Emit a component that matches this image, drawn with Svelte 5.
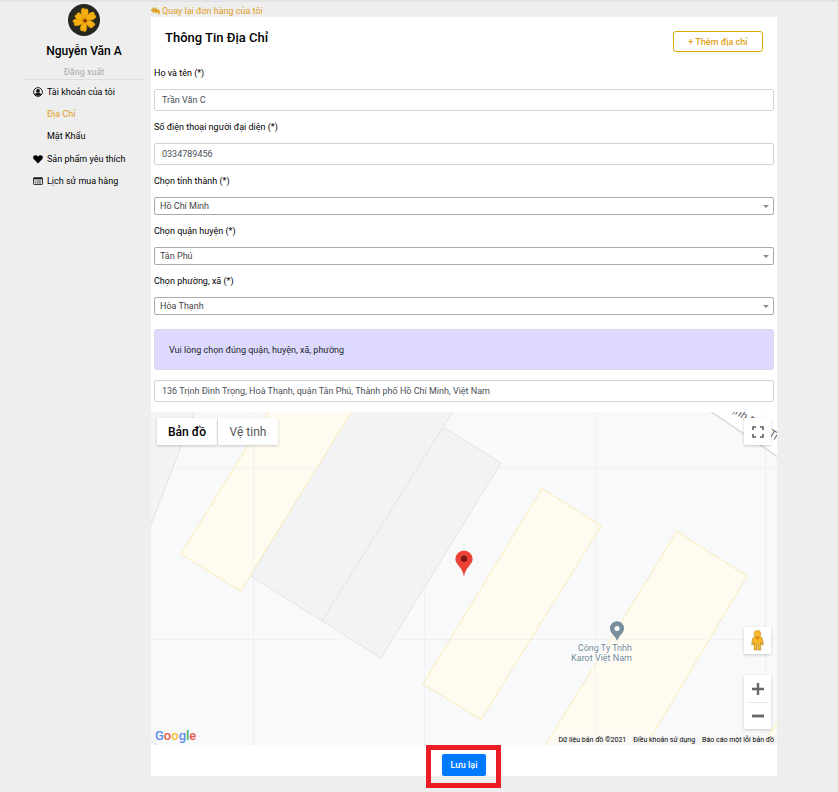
<script>
  let fullName = $state('Trần Văn C');
  let phone = $state('0334789456');
  let address = $state(
    '136 Trịnh Đình Trọng, Hoà Thạnh, quận Tân Phú, Thành phố Hồ Chí Minh, Việt Nam'
  );
  const regions = [
    { id: 'city', label: 'Chọn tỉnh thành (*)', value: 'Hồ Chí Minh' },
    { id: 'district', label: 'Chọn quận huyện (*)', value: 'Tân Phú' },
    { id: 'ward', label: 'Chọn phường, xã (*)', value: 'Hòa Thạnh' }
  ];
</script>

<div class="page">
  <aside class="sidebar">
    <svg class="avatar" viewBox="0 0 32 32" aria-hidden="true">
      <circle cx="16" cy="16" r="16" fill="#26271f" />
      <g fill="#f5b010" stroke="#d98c08" stroke-width=".4">
        <path d="M17 16C13.500 13 12 7 14 4.500c1.500-1.200 2.500 0 3 1 1-1.300 2.500-1 3 .5C21 9 19.500 13 17 16z" />
        <path d="M17 16c1-4 4-7.500 7.500-8 2 0 2.500 1.500 1.800 2.700 1.700.3 2.200 1.800 1.200 3.300C25 16.500 20.500 17 17 16z" />
        <path d="M17 16.500c4-.8 8 .5 9.800 3.200.8 1.500-.3 2.600-1.800 2.500 0 1.700-1.700 2.300-3.200 1.300-2.500-1.500-4-4-4.800-7z" />
        <path d="M17 17c2 3 2.500 7.500 1 10-1 1.300-2.300.8-2.700-.3-1.500.8-2.800 0-3-1.500-.3-3 1.700-6.500 4.700-8.200z" />
        <path d="M16.500 17c-2 3-5.500 5.200-9 4.700-1.700-.3-2-1.800-1-2.900-2-.3-2.300-2-.8-3C8.500 14 13 14.500 16.500 17z" />
        <path d="M16.500 16.500c-4 .3-8-.7-9.500-3.500-.7-1.500.5-2.500 2-2.200-.3-1.700 1-2.700 2.600-1.900 2.400 1.300 4.500 4.400 4.900 7.600z" />
      </g>
      <circle cx="16.800" cy="16.500" r="2.300" fill="#b9600a" />
      <circle cx="17.300" cy="17" r="1.200" fill="#6c3207" />
    </svg>
    <h2 class="user">Nguyễn Văn A</h2>
    <a class="logout" href="#logout">Đăng xuất</a>
    <nav>
      <ul>
        <li>
          <a href="#account">
            <svg class="icon" viewBox="0 0 16 16" aria-hidden="true">
              <circle cx="8" cy="8" r="7" fill="none" stroke="#111" stroke-width="1.500" />
              <circle cx="8" cy="6.300" r="3" fill="#111" />
              <path d="M3 12.500C3.500 10 5.500 9.700 8 9.700s4.500.3 5 2.800C11.500 14.500 4.500 14.500 3 12.500z" fill="#111" />
            </svg>
            Tài khoản của tôi
          </a>
          <ul class="sub">
            <li><a class="active" href="#address">Địa Chỉ</a></li>
            <li><a href="#password">Mật Khẩu</a></li>
          </ul>
        </li>
        <li>
          <a href="#favorites">
            <svg class="icon" viewBox="0 0 16 16" aria-hidden="true">
              <path d="M8 15 1.500 8.500C-1 5.500.5 2 4 2c2 0 3.300 1 4 2.300C8.700 3 10 2 12 2c3.500 0 5 3.500 2.500 6.500z" fill="#000" />
            </svg>
            Sản phẩm yêu thích
          </a>
        </li>
        <li>
          <a href="#history">
            <svg class="icon" viewBox="0 0 16 16" aria-hidden="true">
              <rect x=".8" y="2.800" width="14.400" height="10.800" rx="1" fill="#ddd" stroke="#222" stroke-width="1.400" />
              <path d="M1 4h14" stroke="#111" stroke-width="2.400" />
              <path d="M3 8h2M6 8h7M3 11h2M6 11h7" stroke="#444" stroke-width="1.300" />
            </svg>
            Lịch sử mua hàng
          </a>
        </li>
      </ul>
    </nav>
  </aside>

  <main>
    <a class="back" href="#orders">
      <svg viewBox="0 0 18 16" aria-hidden="true">
        <path d="M5.500 1v3L3 6.500 5.500 9v3L0 6.500zM10 1v3.500c5 0 7.500 2 7.500 5.500 0 2-1 4-2.500 5 .8-3.500-.5-5-5-5v2.500L4 6.500z" fill="#e0a020" stroke="#e0a020" />
      </svg>
      Quay lại đơn hàng của tôi
    </a>

    <form class="card" onsubmit={(e) => e.preventDefault()}>
      <header>
        <h1>Thông Tin Địa Chỉ</h1>
        <button class="add" type="button">+ Thêm địa chỉ</button>
      </header>

      <div class="fields">
        <label for="name">Họ và tên (*)</label>
        <input id="name" type="text" bind:value={fullName} />
        <label for="phone">Số điện thoại người đại diện (*)</label>
        <input id="phone" type="text" bind:value={phone} />
        {#each regions as r (r.id)}
          <label for={r.id}>{r.label}</label>
          <div class="select">
            <select id={r.id}><option>{r.value}</option></select>
          </div>
        {/each}
        <p class="notice">Vui lòng chọn đúng quận, huyện, xã, phường</p>
        <input type="text" aria-label="Địa chỉ" bind:value={address} />
      </div>

      <section class="map" aria-label="Bản đồ">
        <svg class="canvas" viewBox="151 412 626 333" preserveAspectRatio="xMidYMid slice">
          <rect x="151" y="412" width="626" height="333" fill="#f8f9fb" />
          <g fill="#f1f3f4" stroke="#e1e3e5" stroke-width="1">
            <path d="M195 411 150 527V411z" />
            <path d="M351 411 250.500 576 381 658 501 463 443 427 453 411z" />
            <path d="M443 427 322 621" />
          </g>
          <g fill="#fffbf0" stroke="#fdeab5" stroke-width="1">
            <path d="M269 411 181 554 240.500 591 352 411z" />
            <path d="M542 488.500 601 526 481 719.500 423 684z" />
            <path d="M677 531.500 747 576 646 746H545z" />
            <path d="M778 720 762 746H778z" />
          </g>
          <path d="M710 411 778 457V411z" fill="#fff" stroke="#d8dadd" stroke-width="1.500" />
          <path d="M150 740 159 746" stroke="#d8dadd" />
          <path d="M253.500 412v333M424.500 412v333M595.500 412v333M765.500 412v333M151 468.500h626M151 639.500h626" stroke="#eceef0" stroke-opacity=".7" />
          <text class="road" transform="translate(724 407) rotate(33)">Trịnh Đình Trọng</text>
          <g transform="translate(464 577)">
            <path d="M0 0C-.8-6-3-8-5.500-11.500-7.500-14-8.600-15.500-8.600-18A8.600 8.600 0 0 1 8.600-18c0 2.500-1.100 4-3.100 6.500C3-8 .8-6 0 0z" fill="#ea4335" />
            <circle cy="-18.200" r="3.200" fill="#811411" />
          </g>
          <g transform="translate(617 641)">
            <path d="M0 0C-1-3-3-5-5-7.500-6.500-9.500-7-11-7-12.700a7 7 0 0 1 14 0c0 1.700-.5 3.200-2 5.200C3-5 1-3 0 0z" fill="#78909c" />
            <circle cy="-12.500" r="2.500" fill="#fff" />
          </g>
          <text class="place" x="632" y="651">Công Ty Tnhh</text>
          <text class="place" x="632" y="661">Karot Việt Nam</text>
        </svg>

        <div class="types">
          <button type="button" class="on">Bản đồ</button>
          <button type="button">Vệ tinh</button>
        </div>
        <button class="ctl full" type="button" aria-label="Toàn màn hình">
          <svg width="12" height="12" viewBox="0 0 12 12">
            <path d="M1 4V1h3M8 1h3v3M11 8v3H8M4 11H1V8" fill="none" stroke="#666" stroke-width="1.700" />
          </svg>
        </button>
        <div class="side">
          <button class="ctl" type="button" aria-label="Chế độ xem phố">
            <svg width="13" height="21" viewBox="0 0 13 21">
              <path d="M3.500 6.500h6l1.800 2 1 6-1.600.5-1-3v8H7V14H6v6H3.300v-8l-1 3-1.600-.5 1-6z" fill="#fbb829" stroke="#b98b2c" stroke-width=".7" />
              <circle cx="6.500" cy="3.800" r="3.300" fill="#fbb829" stroke="#c7932a" stroke-width=".7" />
              <path d="M4 7h5L6.500 10.500z" fill="#e88a1a" />
            </svg>
          </button>
          <div class="zoom">
            <button type="button" aria-label="Phóng to">
              <svg width="12" height="12" viewBox="0 0 12 12"><path d="M6 0v12M0 6h12" stroke="#666" stroke-width="2.400" /></svg>
            </button>
            <button type="button" aria-label="Thu nhỏ">
              <svg width="12" height="12" viewBox="0 0 12 12"><path d="M0 6h12" stroke="#666" stroke-width="2.800" /></svg>
            </button>
          </div>
        </div>
        <a class="google" href="#google" aria-label="Google"
          ><span class="b">G</span><span class="r">o</span><span class="y">o</span><span class="b">g</span><span class="g">l</span><span class="r">e</span></a
        >
        <div class="legal">
          <span>Dữ liệu bản đồ ©2021</span>
          <a href="#terms">Điều khoản sử dụng</a>
          <a href="#report">Báo cáo một lỗi bản đồ</a>
        </div>
      </section>

      <footer>
        <div class="save">
          <button type="submit">Lưu lại</button>
        </div>
      </footer>
    </form>
  </main>
</div>

<style>
  :global(body) {
    background: #eee;
  }
  .page,
  .page * {
    box-sizing: border-box;
  }
  .page {
    display: flex;
    gap: 7px;
    padding: 0 61px 16px 24px;
    border-top: 2px solid #e2e2e2;
    font: 9px/14px Roboto, 'Liberation Sans', sans-serif;
    color: #000;
  }
  a {
    color: inherit;
    text-decoration: none;
  }
  button,
  input,
  select {
    font: inherit;
    margin: 0;
  }
  button {
    padding: 0;
    border: 0;
    background: #fff;
    cursor: pointer;
  }
  h1,
  h2,
  p,
  ul {
    margin: 0;
    padding: 0;
    list-style: none;
  }
  .sidebar {
    width: 120px;
    flex: none;
    display: flex;
    flex-direction: column;
    align-items: center;
    padding-top: 2px;
  }
  .avatar {
    width: 32px;
    height: 32px;
  }
  .user {
    margin: 5px 0 4px;
    font-size: 12px;
    line-height: 20px;
    font-weight: 500;
  }
  .logout {
    align-self: stretch;
    text-align: center;
    color: #aaa;
    border-bottom: 1px solid #ddd;
  }
  nav {
    align-self: stretch;
    padding: 1px 0 0 9px;
  }
  nav a {
    display: flex;
    align-items: center;
    gap: 4px;
    height: 22px;
    white-space: nowrap;
  }
  .icon {
    width: 10px;
    height: 10px;
  }
  .sub {
    padding-left: 14px;
    margin-bottom: 1px;
  }
  .active,
  .back {
    color: #e0a020;
  }
  main {
    flex: 1;
    min-width: 0;
  }
  .back {
    display: flex;
    align-items: center;
    gap: 2px;
    height: 15px;
    padding-top: 2px;
  }
  .back svg {
    width: 9px;
    height: 8px;
  }
  .card {
    background: #fff;
  }
  header {
    display: flex;
    justify-content: space-between;
    align-items: flex-end;
    height: 40px;
    padding: 0 14px 5px;
  }
  h1 {
    font-size: 13px;
    line-height: 28px;
    font-weight: 500;
  }
  .add {
    width: 90px;
    height: 21px;
    border: 1px solid #e0a800;
    border-radius: 3px;
    color: #e0a020;
    font-weight: 500;
  }
  .fields {
    display: flex;
    flex-direction: column;
    padding: 0 3px 10px;
  }
  label {
    padding: 9px 0;
  }
  input {
    width: 100%;
    height: 22px;
    padding: 0 7px;
    border: 1px solid #ced4da;
    border-radius: 2px;
    color: #495057;
    background: #fff;
  }
  .select {
    position: relative;
  }
  select {
    display: block;
    width: 100%;
    height: 18px;
    padding: 0 5px;
    appearance: none;
    border: 1px solid #aaa;
    border-radius: 2px;
    background: #fff;
    color: #444;
  }
  .select::after {
    content: '';
    position: absolute;
    right: 5px;
    top: 8px;
    border: solid transparent;
    border-width: 3px 3px 0;
    border-top-color: #888;
  }
  .notice {
    margin: 14px 0 10px;
    padding: 13px 14px 12px;
    border: 1px solid #d9d9e3;
    border-radius: 3px;
    background: #ded9ff;
    color: #212529;
  }
  .map {
    position: relative;
    height: 333px;
    overflow: hidden;
  }
  .canvas {
    display: block;
    width: 100%;
    height: 100%;
  }
  .road {
    font-size: 11px;
    fill: #5f6368;
  }
  .place {
    font-size: 9px;
    text-anchor: end;
    fill: #6f8794;
    stroke: #fff;
    stroke-width: 2px;
    paint-order: stroke;
  }
  .types {
    position: absolute;
    left: 6px;
    top: 6px;
    display: flex;
    gap: 1px;
  }
  .types button {
    width: 60px;
    height: 27px;
    font-size: 12px;
    color: #565656;
  }
  .types .on {
    color: #000;
    font-weight: 500;
  }
  .types button,
  .ctl,
  .zoom {
    border-radius: 1px;
    box-shadow: 0 1px 3px rgba(0, 0, 0, 0.2);
  }
  .ctl,
  .zoom button {
    display: flex;
    align-items: center;
    justify-content: center;
    width: 27px;
    height: 27px;
  }
  .full {
    position: absolute;
    right: 6px;
    top: 6px;
  }
  .side {
    position: absolute;
    right: 6px;
    bottom: 16px;
    display: flex;
    flex-direction: column;
    gap: 21px;
  }
  .zoom {
    background: linear-gradient(#e6e6e6, #e6e6e6) center / 20px 1px no-repeat #fff;
  }
  .zoom button {
    background: none;
  }
  .google {
    position: absolute;
    left: 4px;
    bottom: 1px;
    font: 500 13px/16px Roboto, sans-serif;
  }
  .b {
    color: #5a8fee;
  }
  .r {
    color: #ea5a4e;
  }
  .y {
    color: #f8c02c;
  }
  .g {
    color: #4bae63;
  }
  .legal {
    position: absolute;
    right: 0;
    bottom: 0;
    display: flex;
    gap: 1px;
    font-size: 7px;
    line-height: 10px;
  }
  .legal > * {
    padding: 0 3px;
    background: rgba(245, 245, 245, 0.7);
  }
  footer {
    display: flex;
    justify-content: center;
    padding-top: 9px;
  }
  .save {
    position: relative;
  }
  .save::after {
    content: '';
    position: absolute;
    inset: -9px -15px -12px -16px;
    border: 5px solid #ed1c24;
    pointer-events: none;
  }
  .save button {
    display: block;
    width: 44px;
    height: 22px;
    border-radius: 2px;
    background: #007bff;
    color: #fff;
    font-weight: 500;
  }
</style>
